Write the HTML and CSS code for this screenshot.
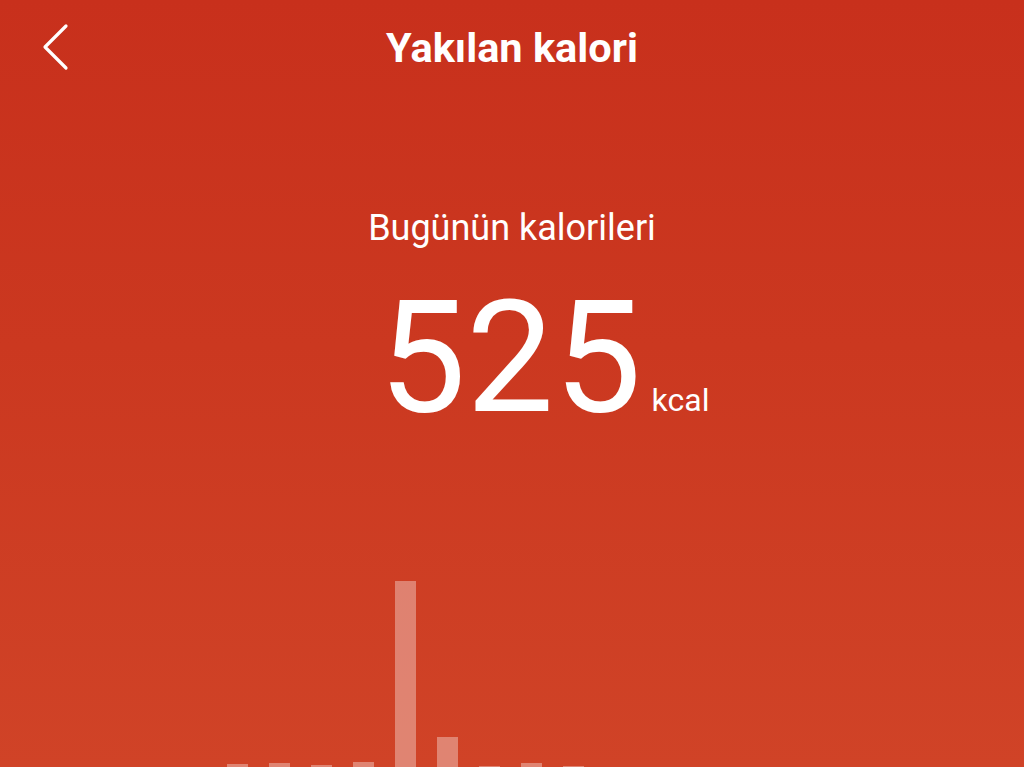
FILE: index.html
```html
<!DOCTYPE html>
<html lang="tr">
<head>
<meta charset="utf-8">
<title>Yakılan kalori</title>
<link rel="stylesheet" href="styles.css">
</head>
<body>
<div class="screen">
  <header class="topbar">
    <button class="back" aria-label="Geri">
      <svg width="30" height="50" viewBox="0 0 30 50"><polyline points="24,3 3,24 24,45" fill="none" stroke="#fff" stroke-width="3.2" stroke-linecap="round" stroke-linejoin="round"/></svg>
    </button>
    <h1 class="title">Yakılan kalori</h1>
    <span class="spacer"></span>
  </header>
  <section class="summary">
    <div class="label">Bugünün kalorileri</div>
    <div class="value"><span class="num">525</span><span class="unit">kcal</span></div>
  </section>
  <section class="chart">
    <div class="bar" style="height:3px"></div>
    <div class="bar" style="height:4px"></div>
    <div class="bar" style="height:2px"></div>
    <div class="bar" style="height:5px"></div>
    <div class="bar" style="height:186px"></div>
    <div class="bar" style="height:30px"></div>
    <div class="bar" style="height:1px"></div>
    <div class="bar" style="height:4px"></div>
    <div class="bar" style="height:1px"></div>
  </section>
</div>
</body>
</html>
```
FILE: styles.css
```css
html, body {
  margin: 0;
  padding: 0;
}
body {
  width: 1024px;
  height: 767px;
  overflow: hidden;
  font-family: Roboto, "Noto Sans", sans-serif;
  color: #fff;
}
.screen {
  height: 767px;
  display: flex;
  flex-direction: column;
  background: linear-gradient(180deg, #c8301c 0%, #cb3820 45%, #d04327 100%);
}
.topbar {
  display: grid;
  grid-template-columns: 120px 1fr 120px;
  align-items: center;
  height: 96px;
}
.back {
  background: none;
  border: 0;
  padding: 0 0 0 42px;
  display: flex;
  align-items: center;
  height: 96px;
  cursor: pointer;
}
.title {
  margin: 0;
  text-align: center;
  font-size: 41.5px;
  font-weight: 700;
  line-height: 96px;
}
.summary {
  display: flex;
  flex-direction: column;
  align-items: center;
  padding-top: 112px;
}
.label {
  font-size: 36px;
  line-height: 40px;
}
.value {
  display: flex;
  align-items: baseline;
  margin-top: 40px;
  padding-left: 64px;
}
.num {
  font-size: 156px;
  line-height: 140px;
  font-weight: 400;
}
.unit {
  font-size: 32px;
  margin-left: 10px;
}
.chart {
  flex: 1;
  display: flex;
  align-items: flex-end;
  gap: 21px;
  padding-left: 227px;
  overflow: hidden;
}
.bar {
  width: 21px;
  background: rgba(255, 255, 255, 0.35);
}
```
